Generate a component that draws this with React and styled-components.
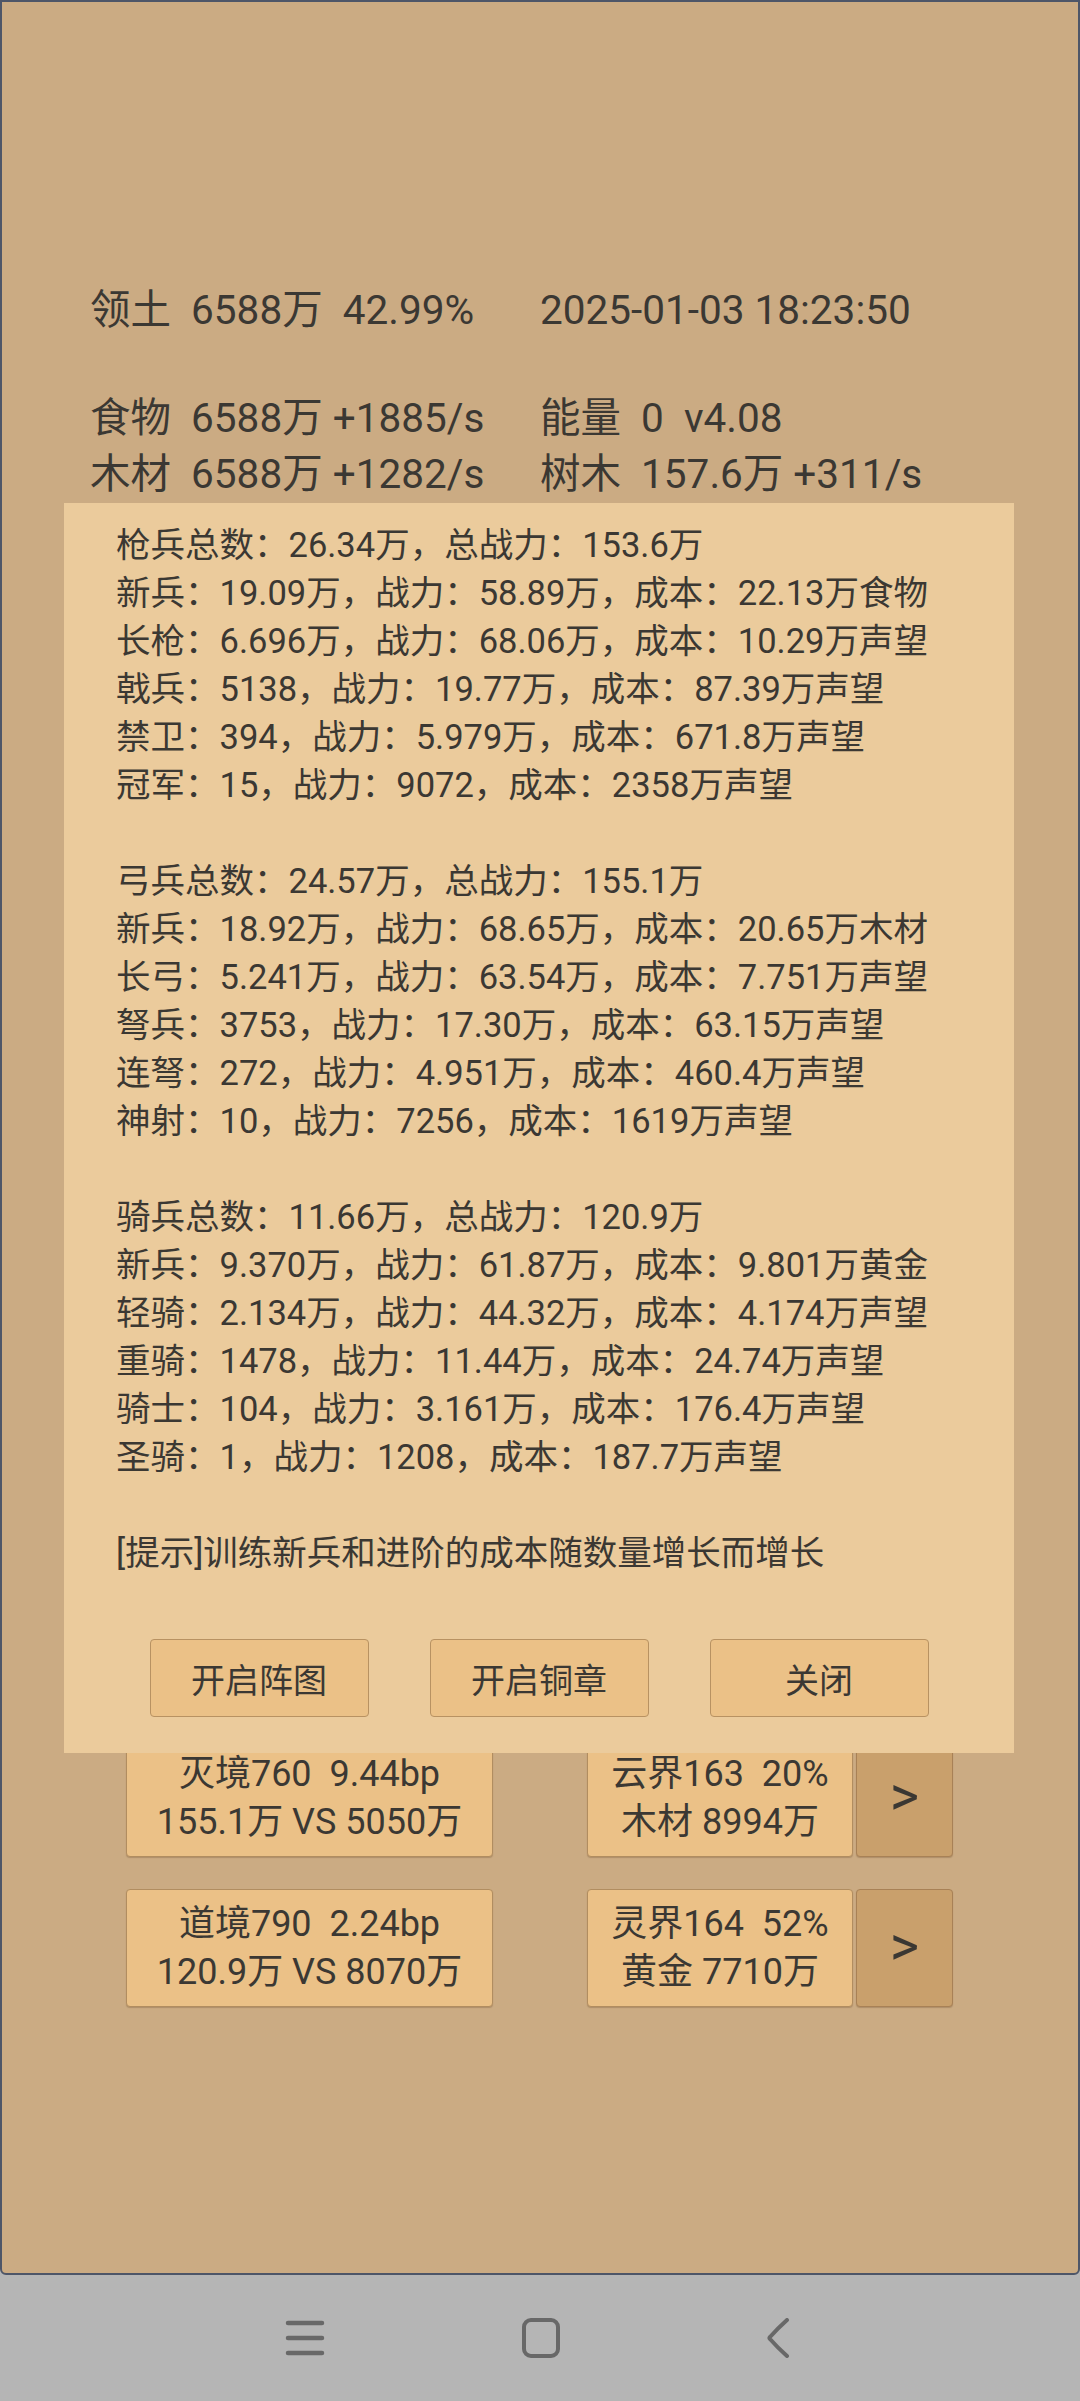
import React from 'react';
import styled, {createGlobalStyle} from 'styled-components';

const GlobalStyle = createGlobalStyle`
  html, body {
    margin: 0;
    padding: 0;
    background: #b5b5b5;
  }
  body {
    font-family: Roboto, "Noto Sans CJK SC", sans-serif;
    color: #3b3833;
  }
`;

const armies = [
    [
        '枪兵总数：26.34万，总战力：153.6万',
        '新兵：19.09万，战力：58.89万，成本：22.13万食物',
        '长枪：6.696万，战力：68.06万，成本：10.29万声望',
        '戟兵：5138，战力：19.77万，成本：87.39万声望',
        '禁卫：394，战力：5.979万，成本：671.8万声望',
        '冠军：15，战力：9072，成本：2358万声望',
    ],
    [
        '弓兵总数：24.57万，总战力：155.1万',
        '新兵：18.92万，战力：68.65万，成本：20.65万木材',
        '长弓：5.241万，战力：63.54万，成本：7.751万声望',
        '弩兵：3753，战力：17.30万，成本：63.15万声望',
        '连弩：272，战力：4.951万，成本：460.4万声望',
        '神射：10，战力：7256，成本：1619万声望',
    ],
    [
        '骑兵总数：11.66万，总战力：120.9万',
        '新兵：9.370万，战力：61.87万，成本：9.801万黄金',
        '轻骑：2.134万，战力：44.32万，成本：4.174万声望',
        '重骑：1478，战力：11.44万，成本：24.74万声望',
        '骑士：104，战力：3.161万，成本：176.4万声望',
        '圣骑：1，战力：1208，成本：187.7万声望',
    ],
];

const stages = [
    {left: ['灭境760  9.44bp', '155.1万 VS 5050万'], right: ['云界163  20%', '木材 8994万']},
    {left: ['道境790  2.24bp', '120.9万 VS 8070万'], right: ['灵界164  52%', '黄金 7710万']},
];

const App = () => {
    return (
        <>
            <GlobalStyle/>
            <Screen>
                <Header>
                    <StatRow>
                        <Stat>{'领土  6588万  42.99%'}</Stat>
                        <Stat>{'2025-01-03 18:23:50'}</Stat>
                    </StatRow>
                    <StatRow $gap={52}>
                        <Stat>{'食物  6588万 +1885/s'}</Stat>
                        <Stat>{'能量  0  v4.08'}</Stat>
                    </StatRow>
                    <StatRow>
                        <Stat>{'木材  6588万 +1282/s'}</Stat>
                        <Stat>{'树木  157.6万 +311/s'}</Stat>
                    </StatRow>
                </Header>

                <StageList>
                    {stages.map((s, i) => (
                        <StageRow key={i}>
                            <StageButton $width={367}>
                                <div>{s.left[0]}</div>
                                <div>{s.left[1]}</div>
                            </StageButton>
                            <StageGroup>
                                <StageButton $width={266}>
                                    <div>{s.right[0]}</div>
                                    <div>{s.right[1]}</div>
                                </StageButton>
                                <ArrowButton>{'>'}</ArrowButton>
                            </StageGroup>
                        </StageRow>
                    ))}
                </StageList>

                <Modal>
                    {armies.map((group, i) => (
                        <Group key={i}>
                            {group.map((line, j) => <Line key={j}>{line}</Line>)}
                        </Group>
                    ))}
                    <Line>{'[提示]训练新兵和进阶的成本随数量增长而增长'}</Line>
                    <ModalActions>
                        <ModalButton>{'开启阵图'}</ModalButton>
                        <ModalButton>{'开启铜章'}</ModalButton>
                        <ModalButton>{'关闭'}</ModalButton>
                    </ModalActions>
                </Modal>
            </Screen>

            <NavBar>
                <NavIcon width="40" height="40" viewBox="0 0 40 40">
                    <path d="M3 5h34M3 20h34M3 35h34" stroke="#686868" strokeWidth="4.5" strokeLinecap="round" fill="none"/>
                </NavIcon>
                <NavIcon width="40" height="40" viewBox="0 0 40 40">
                    <rect x="3" y="2" width="34" height="36" rx="7" stroke="#686868" strokeWidth="4" fill="none"/>
                </NavIcon>
                <NavIcon width="40" height="40" viewBox="0 0 40 40">
                    <path d="M30 2Q20 11 13 19Q12 20 13 21Q20 29 30 38" stroke="#686868" strokeWidth="4" strokeLinecap="round" strokeLinejoin="round" fill="none"/>
                </NavIcon>
            </NavBar>
        </>
    );
};

export default App;


const Screen = styled.div`
position: relative;
box-sizing: border-box;
height: 2275px;
background: #cbab83;
border: 2px solid #4e5668;
border-radius: 0 0 6px 6px;
overflow: hidden;
`;

const Header = styled.div`
padding: 280px 0 0 88px;
display: flex;
flex-direction: column;
`;

const StatRow = styled.div`
display: grid;
grid-template-columns: 450px 450px;
margin-top: ${p => p.$gap || 0}px;
`;

const Stat = styled.div`
font-size: 40.5px;
line-height: 56px;
white-space: pre;
`;

const StageList = styled.div`
margin-top: 1237px;
display: flex;
flex-direction: column;
gap: 32px;
padding-left: 124px;
`;

const StageRow = styled.div`
display: flex;
gap: 94px;
`;

const StageGroup = styled.div`
display: flex;
gap: 3px;
`;

const StageButton = styled.div`
box-sizing: border-box;
width: ${p => p.$width}px;
height: 118px;
display: flex;
flex-direction: column;
align-items: center;
justify-content: center;
background: #ebc187;
border: 1.5px solid #b18d60;
border-radius: 4px;
box-shadow: 0 1px 1px rgba(90, 60, 30, 0.25);
font-size: 36px;
line-height: 48px;
white-space: pre;
`;

const ArrowButton = styled(StageButton).attrs({$width: 97})`
background: #c9a06c;
border-color: #a88156;
font-size: 56px;
padding-bottom: 4px;
`;

const Modal = styled.div`
position: absolute;
left: 62px;
top: 501px;
width: 950px;
height: 1250px;
box-sizing: border-box;
background: #ebcb9c;
padding: 18px 0 0 52px;
display: flex;
flex-direction: column;
`;

const Group = styled.div`
display: flex;
flex-direction: column;
margin-bottom: 48px;
`;

const Line = styled.div`
font-size: 34.5px;
line-height: 48px;
white-space: pre;
`;

const ModalActions = styled.div`
display: flex;
justify-content: center;
gap: 61px;
margin-top: 62px;
margin-left: -52px;
`;

const ModalButton = styled.div`
box-sizing: border-box;
width: 219px;
height: 78px;
display: flex;
align-items: center;
justify-content: center;
background: #ebc187;
border: 1.5px solid #b89262;
border-radius: 4px;
font-size: 34px;
`;

const NavBar = styled.div`
height: 126px;
display: flex;
align-items: center;
justify-content: center;
gap: 196px;
padding-left: 2px;
`;

const NavIcon = styled.svg`
display: block;
`;
